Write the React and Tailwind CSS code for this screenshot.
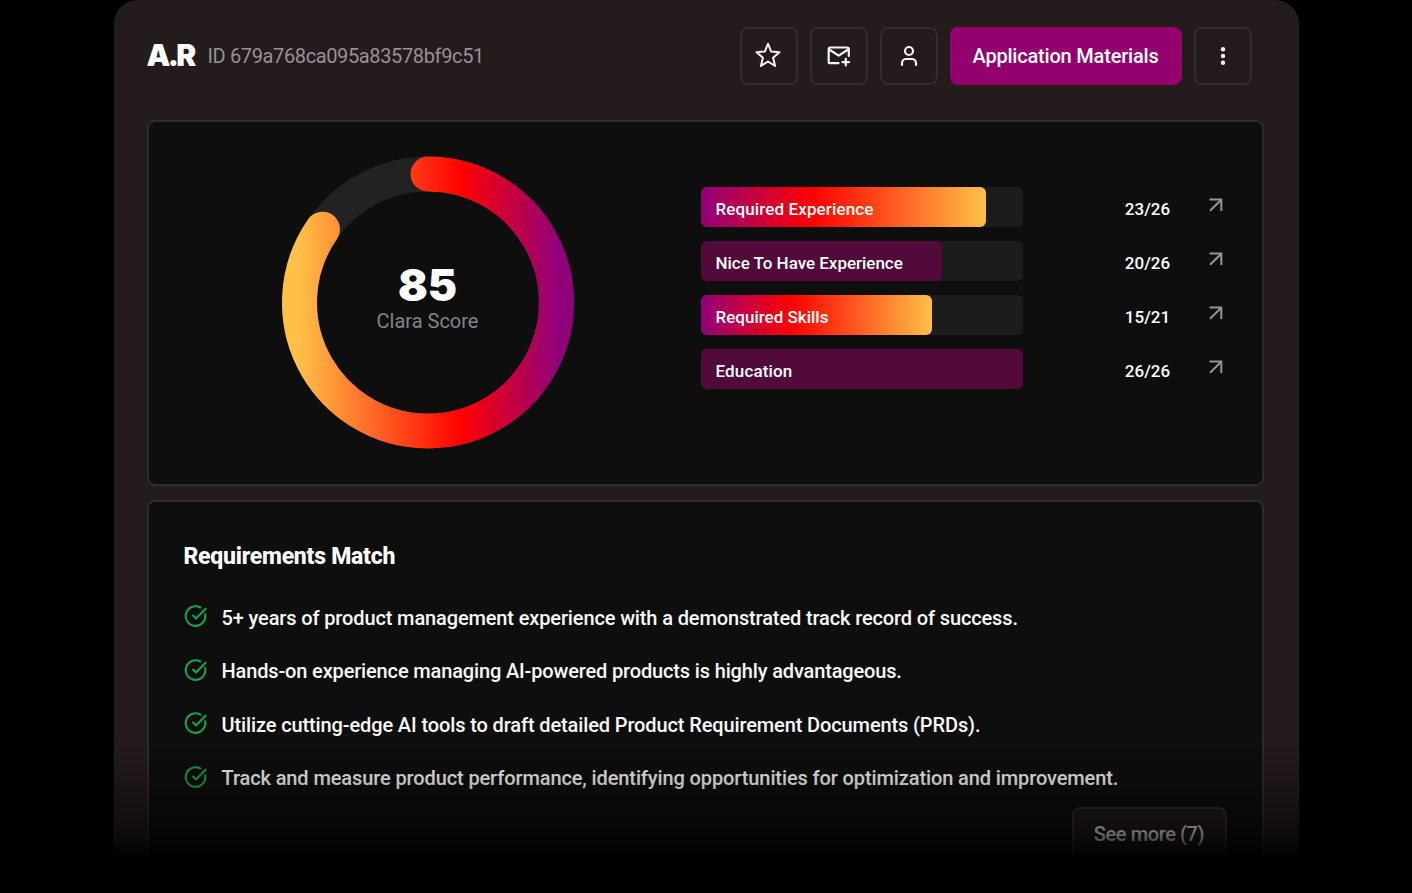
import React from 'react';
import { User } from 'lucide-react';

const bars = [
    { label: 'Required Experience', score: 23, total: 26, percent: 88.6, highlight: true, tracking: 'tracking-[0.120px]' },
    { label: 'Nice To Have Experience', score: 20, total: 26, percent: 74.9, highlight: false, tracking: 'tracking-[-0.020px]' },
    { label: 'Required Skills', score: 15, total: 21, percent: 71.8, highlight: true, tracking: 'tracking-[0px]' },
    { label: 'Education', score: 26, total: 26, percent: 100, highlight: false, tracking: 'tracking-[0.150px]' },
];

const requirements = [
    { text: '5+ years of product management experience with a demonstrated track record of success.', tracking: 'tracking-[-0.130px]' },
    { text: 'Hands-on experience managing AI-powered products is highly advantageous.', tracking: 'tracking-[-0.150px]' },
    { text: 'Utilize cutting-edge AI tools to draft detailed Product Requirement Documents (PRDs).', tracking: 'tracking-[-0.120px]' },
    { text: 'Track and measure product performance, identifying opportunities for optimization and improvement.', tracking: 'tracking-[-0.110px]' },
];

const RADIUS = 128.5;
const CIRCUMFERENCE = 2 * Math.PI * RADIUS;

function StarIcon() {
    return (
        <svg className="mr-px mb-[3px]" width="26" height="26" viewBox="0 0 26 26" fill="none" stroke="currentColor" strokeWidth="2" strokeLinejoin="round">
            <path d="M13 1.700L16.100 9.500L24.500 10.200L18.100 15.700L20.100 24L13 19.500L5.900 24L7.900 15.700L1.500 10.200L9.900 9.500Z" />
        </svg>
    );
}

function MailPlusIcon() {
    return (
        <svg width="24" height="24" viewBox="0 0 24 24" fill="none" stroke="currentColor" strokeWidth="2.200" strokeLinecap="round" strokeLinejoin="round">
            <path d="M11.500 19.200H3.200A1.500 1.500 0 0 1 1.700 17.700V5a1.500 1.500 0 0 1 1.500-1.500h17.100A1.500 1.500 0 0 1 21.800 5V12" />
            <path d="M2.200 5.500l9.500 6.200 9.500-6.200M18.800 14.800v6.600M15.500 18.100h6.600" />
        </svg>
    );
}

function DotsIcon() {
    return (
        <svg width="6" height="20" viewBox="0 0 6 20" fill="currentColor">
            <circle cx="3" cy="3.200" r="2.200" />
            <circle cx="3" cy="10" r="2.200" />
            <circle cx="3" cy="16.800" r="2.200" />
        </svg>
    );
}

function ArrowIcon() {
    return (
        <svg width="14" height="14" viewBox="0 0 14 14" fill="none" stroke="currentColor" strokeWidth="2">
            <path d="M0.500 1.500h11.800v11.500M12 2L1 12.700" />
        </svg>
    );
}

function CheckIcon() {
    return (
        <svg className="mb-[3px] shrink-0" width="24" height="24" viewBox="0 0 24 24" fill="none" stroke="currentColor" strokeWidth="2.100" strokeLinecap="round" strokeLinejoin="round">
            <path d="M21.200 10.400A9.800 9.800 0 1 1 16.300 3.500" />
            <path d="M9 11.500l3 3L21.600 4.700" />
        </svg>
    );
}

function IconButton({ children }) {
    return (
        <button className="flex h-[58px] w-[58px] items-center justify-center rounded-lg border-2 border-[#312d2f] text-[#f7f2f4]">
            {children}
        </button>
    );
}

function ScoreRing({ score }) {
    return (
        <div className="relative h-[292px] w-[292px]">
            <svg width="292" height="293" viewBox="0 -0.5 292 293" fill="none">
                <defs>
                    <linearGradient id="ring" gradientUnits="userSpaceOnUse" x1="276" y1="0" x2="16" y2="0">
                        <stop offset="0" stopColor="#90007a" />
                        <stop offset="0.370" stopColor="#ff0000" />
                        <stop offset="1" stopColor="#ffc048" />
                    </linearGradient>
                </defs>
                <circle cx="146" cy="146" r={RADIUS} stroke="#222222" strokeWidth="35" />
                <path
                    d="M146 17.500A128.500 128.500 0 1 1 145.990 17.500"
                    stroke="url(#ring)"
                    strokeWidth="35"
                    strokeLinecap="round"
                    strokeDasharray={`${(CIRCUMFERENCE * (score - 0.4)) / 100} ${CIRCUMFERENCE}`}
                />
            </svg>
            <div className="absolute inset-0 flex flex-col items-center pt-[106px]">
                <span className="font-['Inter'] text-[44px] leading-[46px] font-black text-white">{score}</span>
                <span className="text-[20px] leading-[26px] text-[#84818c]">Clara Score</span>
            </div>
        </div>
    );
}

export default function App() {
    return (
        <div className="relative h-[893px] overflow-hidden bg-black font-['Roboto',sans-serif] text-white">
            <div className="mx-auto h-full w-[1185px] rounded-t-[24px] bg-[#241b1c] pt-[27px] pr-[35px] pl-[33px]">
                {/* Header */}
                <header className="flex h-[58px] items-center justify-between pr-[12px]">
                    <div className="flex items-center">
                        <h1 className="w-[61px] pb-[2px] font-['Inter'] text-[30px] leading-none font-black tracking-[-2.600px]">A.R</h1>
                        <span className="text-[20px] tracking-[-0.370px] text-[#98909a]">ID 679a768ca095a83578bf9c51</span>
                    </div>
                    <div className="flex gap-3">
                        <IconButton><StarIcon /></IconButton>
                        <IconButton><MailPlusIcon /></IconButton>
                        <IconButton><User size={24} strokeWidth={2.2} /></IconButton>
                        <button className="h-[58px] w-[232px] rounded-lg bg-[#95006f] text-[20px] font-medium tracking-[-0.200px]">
                            Application Materials
                        </button>
                        <IconButton><DotsIcon /></IconButton>
                    </div>
                </header>

                {/* Score */}
                <section className="mt-[35px] flex h-[366px] rounded-lg border-2 border-[#2e2b2c] bg-[#0e0e0e] pt-[34px] pl-[133px]">
                    <ScoreRing score={85} />
                    <div className="ml-[127px] flex flex-col gap-[14px] pt-[31px]">
                        {bars.map((bar) => (
                            <div key={bar.label} className="flex h-10">
                                <div className="h-10 w-[322px] rounded-md bg-[#1c1c1c]">
                                    <div
                                        className={`flex h-full items-center rounded-md pt-[3px] pl-[15px] ${bar.highlight ? 'bg-[linear-gradient(90deg,#90007a_0%,#ff0000_39%,#ffc048_100%)]' : 'bg-[#520a3b]'}`}
                                        style={{ width: `${bar.percent}%` }}
                                    >
                                        <span className={`text-[17px] leading-6 font-medium whitespace-nowrap ${bar.tracking}`}>{bar.label}</span>
                                    </div>
                                </div>
                                <span className="ml-[95px] w-[60px] pt-[10px] text-center text-[17px] leading-6 font-medium">
                                    {bar.score}/{bar.total}
                                </span>
                                <span className="ml-[31px] pt-[11px] text-[#98939b]"><ArrowIcon /></span>
                            </div>
                        ))}
                    </div>
                </section>

                {/* Requirements */}
                <section className="mt-[14px] h-[420px] rounded-t-lg border-2 border-[#2e2b2c] bg-[#0e0e0e] pt-[39px] pr-[35px] pl-[35px]">
                    <h2 className="text-[23px] leading-8 font-extrabold tracking-[-0.250px]">Requirements Match</h2>
                    <ul className="mt-[32.500px] flex flex-col gap-[29.500px]">
                        {requirements.map((item) => (
                            <li key={item.text} className="flex h-6 items-center gap-[14px] text-[#16a34a]">
                                <CheckIcon />
                                <span className={`text-[20px] font-medium whitespace-nowrap text-[#f8f8f8] ${item.tracking}`}>{item.text}</span>
                            </li>
                        ))}
                    </ul>
                    <div className="mt-[16.500px] flex justify-end">
                        <button className="h-[54px] w-[155px] rounded-lg border-2 border-[#353132] bg-[#241b1c] text-[20px] font-medium tracking-[-0.400px]">
                            See more (7)
                        </button>
                    </div>
                </section>
            </div>

            {/* Bottom fade */}
            <div className="pointer-events-none absolute inset-x-0 bottom-0 h-[153px] bg-[linear-gradient(180deg,rgba(0,0,0,0)_0px,rgba(0,0,0,0.2)_38px,rgba(0,0,0,0.58)_93px,#000_119px)]" />
        </div>
    );
}
